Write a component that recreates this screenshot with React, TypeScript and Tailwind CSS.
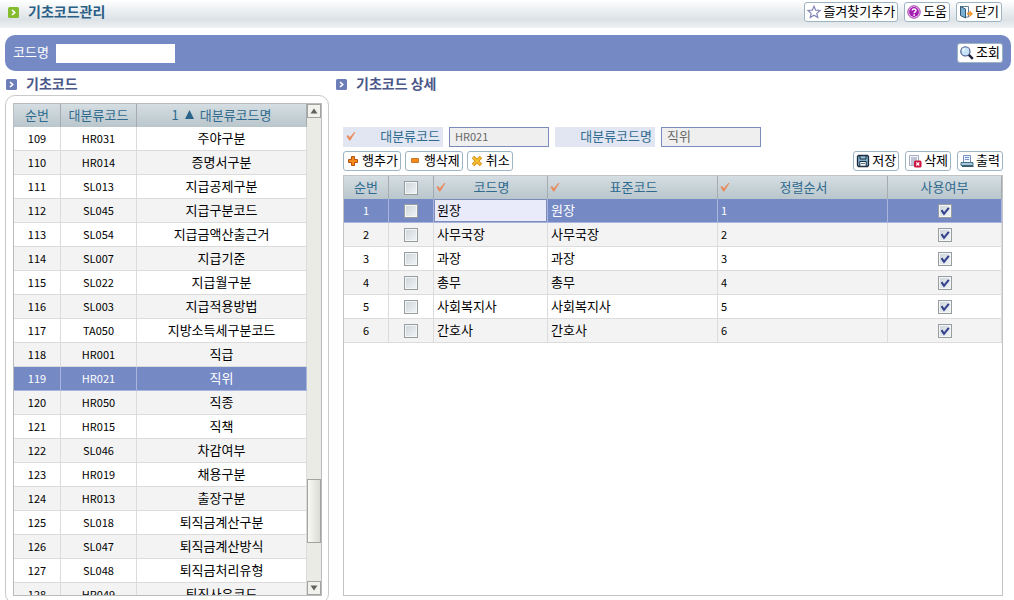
import React, { useState } from 'react';

const categories = [
  { no: 109, code: 'HR031', name: '주야구분' },
  { no: 110, code: 'HR014', name: '증명서구분' },
  { no: 111, code: 'SL013', name: '지급공제구분' },
  { no: 112, code: 'SL045', name: '지급구분코드' },
  { no: 113, code: 'SL054', name: '지급금액산출근거' },
  { no: 114, code: 'SL007', name: '지급기준' },
  { no: 115, code: 'SL022', name: '지급월구분' },
  { no: 116, code: 'SL003', name: '지급적용방법' },
  { no: 117, code: 'TA050', name: '지방소득세구분코드' },
  { no: 118, code: 'HR001', name: '직급' },
  { no: 119, code: 'HR021', name: '직위' },
  { no: 120, code: 'HR050', name: '직종' },
  { no: 121, code: 'HR015', name: '직책' },
  { no: 122, code: 'SL046', name: '차감여부' },
  { no: 123, code: 'HR019', name: '채용구분' },
  { no: 124, code: 'HR013', name: '출장구분' },
  { no: 125, code: 'SL018', name: '퇴직금계산구분' },
  { no: 126, code: 'SL047', name: '퇴직금계산방식' },
  { no: 127, code: 'SL048', name: '퇴직금처리유형' },
  { no: 128, code: 'HR049', name: '퇴직사유코드' },
];

const details = ['원장', '사무국장', '과장', '총무', '사회복지사', '간호사'];

const icons: Record<string, React.ReactNode> = {
  star: (
    <path d="M7 1.2 8.7 5.2 13 5.5 9.8 8.4 10.8 12.6 7 10.3 3.2 12.6 4.2 8.4 1 5.5 5.3 5.2Z" fill="#fff" stroke="#8184b8" strokeWidth="1.2" />
  ),
  help: (
    <>
      <circle cx="7" cy="7" r="6.2" fill="#f6dcf6" stroke="#9a2fa6" />
      <circle cx="7" cy="7" r="4.9" fill="#a31bb0" />
      <path d="M5.2 5.6C5.2 3.4 9 3.4 9 5.5 9 7 7.1 6.8 7.1 8.3" fill="none" stroke="#fff" strokeWidth="1.4" />
      <rect x="6.3" y="9.3" width="1.6" height="1.5" fill="#fff" />
    </>
  ),
  close: (
    <>
      <path d="M1.5 1.5H9.5V12H6" fill="#fff" stroke="#5f7f99" />
      <path d="M1.5 1.5 6.5 4V13L1.5 10.5Z" fill="#79b2d6" stroke="#35566f" />
      <path d="M8 7.6H10.5V5.2L14 8.7 10.5 12.2V9.8H8Z" fill="#f39a35" />
    </>
  ),
  search: (
    <>
      <path d="M8.6 8.6 12.8 12.8" stroke="#1d2438" strokeWidth="2.4" />
      <circle cx="5.4" cy="5.4" r="4.6" fill="#c5e4f8" stroke="#3f4f86" strokeWidth="1.1" />
      <path d="M3 5.2C3 3.8 4 3 5.2 3" stroke="#fff" strokeWidth="1.4" fill="none" />
    </>
  ),
  plus: <path d="M5.5 2.5H8.5V5.5H11.5V8.5H8.5V11.5H5.5V8.5H2.5V5.5H5.5Z" fill="#f58a1c" stroke="#b8500c" />,
  minus: <path d="M3.5 4.5H10.5V8.5H3.5Z" fill="#f58a1c" stroke="#c8782c" />,
  cancel: (
    <>
      <path d="M3 3 11 11M11 3 3 11" stroke="#d08a12" strokeWidth="3.4" />
      <path d="M3.3 3.3 10.7 10.7M10.7 3.3 3.3 10.7" stroke="#fdc32c" strokeWidth="1.7" />
    </>
  ),
  save: (
    <>
      <path d="M1.5 2.5 2.5 1.5H11.5L12.5 2.5V11.5L11.5 12.5H2.5L1.5 11.5Z" fill="#7fb0cd" stroke="#1b2b3c" strokeWidth="1.3" />
      <path d="M4 1.8H10V5H4Z" fill="#9cc6de" stroke="#1b2b3c" />
      <path d="M3.8 7.5H10.2V12.2H3.8Z" fill="#fff" stroke="#1b2b3c" />
      <path d="M5 9.5H9" stroke="#4e7590" />
    </>
  ),
  remove: (
    <>
      <path d="M1.5 1.5H10.5V11.5H1.5Z" fill="#f5f7fb" stroke="#a3aec4" />
      <path d="M3 4H9M3 6H9M3 8H6M3 10H6" stroke="#8792ad" />
      <rect x="6" y="6.5" width="7.5" height="7" rx="1.5" fill="#cf1240" />
      <path d="M8.2 8.4 11.3 11.5M11.3 8.4 8.2 11.5" stroke="#fff" strokeWidth="1.1" />
    </>
  ),
  print: (
    <>
      <path d="M3.5 1.5H10.5V8.5H3.5Z" fill="#eef4fd" stroke="#7490c4" />
      <path d="M5 3.5H9M5 5.5H9" stroke="#7490c4" />
      <path d="M1 8.5H13V11.5H1Z" fill="#a6c6d8" stroke="#47718a" />
      <path d="M2 12.3H13.5" stroke="#2c5268" strokeWidth="1.3" />
    </>
  ),
};

function ToolButton({ icon, label }: { icon: string; label: string }) {
  return (
    <button
      type="button"
      className="flex h-5 shrink-0 items-center gap-0.5 rounded-[3px] border border-[#9db4c3] bg-white px-0.5 text-[13px] leading-4 whitespace-nowrap text-black"
    >
      <svg viewBox="0 0 14 14" className="size-3.5 shrink-0" aria-hidden="true">{icons[icon]}</svg>
      <span className="pb-0.5">{label}</span>
    </button>
  );
}

function Bullet({ green = false }: { green?: boolean }) {
  return (
    <svg viewBox="0 0 11 11" className="size-[11px] shrink-0" aria-hidden="true">
      <rect width="11" height="11" rx="1.5" fill={green ? '#85bb2f' : '#6c7db8'} />
      <path d="M4 3 6.7 5.5 4 8" fill="none" stroke="#fff" strokeWidth="1.7" />
    </svg>
  );
}

function RequiredMark() {
  return (
    <svg viewBox="0 0 10 10" className="size-2.5 shrink-0" aria-hidden="true">
      <path d="M0.5 5 2 4 3.8 6.2 8.6 0.8 9.4 1.3 4.2 9.4 3.2 9.4Z" fill="#e98a5c" />
    </svg>
  );
}

function SectionTitle({ children }: { children: React.ReactNode }) {
  return (
    <h2 className="flex h-6 shrink-0 items-center gap-[9px] pt-0.5 pl-px text-sm leading-5 font-bold text-[#4a5788]">
      <Bullet />
      <span className="pb-0.5">{children}</span>
    </h2>
  );
}

function Tick({ label, on = false }: { label: string; on?: boolean }) {
  const [checked, setChecked] = useState(on);
  return (
    <span className="relative mx-auto block size-3.5">
      <input
        type="checkbox"
        aria-label={label}
        checked={checked}
        onChange={(e) => setChecked(e.target.checked)}
        className="block size-3.5 appearance-none border border-[#979c9f] bg-linear-to-br from-[#cbd5da] to-[#f2f5f8] shadow-[inset_0_0_0_1px_#f4f6f8]"
      />
      {checked && (
        <svg viewBox="0 0 14 14" className="pointer-events-none absolute inset-0 size-3.5" aria-hidden="true">
          <path d="M3.5 6.2 6 9.8 10.8 3.8" fill="none" stroke="#34428c" strokeWidth="2.1" />
        </svg>
      )}
    </span>
  );
}

function ScrollArrow({ down = false }: { down?: boolean }) {
  return (
    <button
      type="button"
      aria-label={down ? '아래로' : '위로'}
      className="flex h-3.5 shrink-0 items-center justify-center border border-[#a3a49e] bg-[#f1f1ed]"
    >
      <svg viewBox="0 0 8 6" className="h-1.5 w-2" aria-hidden="true">
        <path d={down ? 'M0.5 0.5H7.5L4 5.5Z' : 'M0.5 5.5H7.5L4 0.5Z'} fill="#61625c" />
      </svg>
    </button>
  );
}

const th = 'h-[23px] border-r border-[#a5abae] px-0 pt-0 pb-0.5 font-normal';
const thTick = 'h-[23px] border-r border-[#a5abae] p-0';
const td = 'h-6 border-r border-b border-[#dcdcdc] pb-0.5';
const tdOn = 'h-6 border-r border-b border-[#a9b5dc] pb-0.5';
const tdTick = 'h-6 border-r border-b border-[#dcdcdc] p-0';
const tdTickOn = 'h-6 border-r border-b border-[#a9b5dc] p-0';

export default function App() {
  const [selected, setSelected] = useState(119);

  return (
    <div className="flex h-screen flex-col overflow-hidden bg-white font-['Noto_Sans_CJK_KR',sans-serif] text-[13px] leading-4 text-black">
      <header className="flex h-7 shrink-0 items-start justify-between bg-linear-to-b from-white via-[#dce2e6] via-70% to-[#f0f2f4] pt-0.5 pr-3 pl-2">
        <h1 className="flex h-5 items-center gap-[9px] text-sm leading-5 font-bold text-[#2a5f86]">
          <Bullet green />
          <span className="pb-0.5">기초코드관리</span>
        </h1>
        <div className="flex gap-1.5">
          <ToolButton icon="star" label="즐겨찾기추가" />
          <ToolButton icon="help" label="도움" />
          <ToolButton icon="close" label="닫기" />
        </div>
      </header>

      {/* search bar */}
      <form
        onSubmit={(e) => e.preventDefault()}
        className="mt-[7px] mr-[3px] ml-[5px] flex h-9 shrink-0 items-center justify-between rounded-[10px] bg-[#7589c5] px-2"
      >
        <div className="flex items-center gap-[7px]">
          <label htmlFor="codeName" className="pb-0.5 text-white">코드명</label>
          <input id="codeName" type="text" className="h-[19px] w-[119px] bg-white px-1 outline-none" />
        </div>
        <ToolButton icon="search" label="조회" />
      </form>

      <main className="flex min-h-0 flex-1">
        {/* category list */}
        <section className="ml-[5px] flex w-[324px] shrink-0 flex-col">
          <SectionTitle>기초코드</SectionTitle>
          <div className="-mb-1 flex min-h-0 flex-1 flex-col rounded-[10px] border border-[#c9c9c9] p-[7px] pr-1.5">
            <div className="flex min-h-0 flex-1 border border-[#b9bcbe]">
              <div className="min-w-0 flex-1 overflow-hidden">
                <table className="w-full table-fixed border-separate border-spacing-0 text-center">
                  <colgroup>
                    <col className="w-[47px]" />
                    <col className="w-[76px]" />
                    <col />
                  </colgroup>
                  <thead className="bg-linear-to-b from-[#d5dee2] to-[#b9c6cc] text-[#2f6a8f]">
                    <tr>
                      <th className={th}>순번</th>
                      <th className={th}>대분류코드</th>
                      <th className={th}>
                        <span className="flex items-center justify-center gap-1.5">
                          1
                          <svg viewBox="0 0 9 9" className="size-[9px]" aria-hidden="true">
                            <path d="M4.5 0 9 9H0Z" fill="#2a648a" />
                          </svg>
                          대분류코드명
                        </span>
                      </th>
                    </tr>
                  </thead>
                  <tbody>
                    {categories.map((c) => {
                      const on = c.no === selected;
                      return (
                        <tr
                          key={c.no}
                          onClick={() => setSelected(c.no)}
                          className={on ? 'bg-[#7589c5] text-white' : 'odd:bg-white even:bg-[#f3f3f3]'}
                        >
                          <td className={`${on ? tdOn : td} text-[11px]`}>{c.no}</td>
                          <td className={`${on ? tdOn : td} text-[11px]`}>{c.code}</td>
                          <td className={on ? tdOn : td}>{c.name}</td>
                        </tr>
                      );
                    })}
                  </tbody>
                </table>
              </div>
              <div className="flex w-3.5 shrink-0 flex-col bg-[#ebebe6]">
                <ScrollArrow />
                <div className="flex-1" />
                <div className="h-16 border border-[#a3a49e] bg-linear-to-r from-[#f8f8f5] to-[#dcdcd5]" />
                <div className="h-[38px]" />
                <ScrollArrow down />
              </div>
            </div>
          </div>
        </section>

        {/* code details */}
        <section className="ml-1.5 flex min-w-0 flex-1 flex-col pr-[11px]">
          <SectionTitle>기초코드 상세</SectionTitle>

          <div className="mt-8 ml-2 flex h-5 shrink-0 gap-1.5">
            <label htmlFor="majorCode" className="flex w-[100px] items-center justify-between bg-[#e2e6f2] px-[3px] pb-0.5 text-[#2f6a8f]">
              <RequiredMark />
              대분류코드
            </label>
            <input
              id="majorCode"
              readOnly
              value="HR021"
              className="w-[100px] border border-[#7c8cba] bg-[#efefef] px-[5px] pb-0.5 text-[11px] text-[#686868] outline-none"
            />
            <label htmlFor="majorName" className="flex w-[100px] items-center justify-end bg-[#e2e6f2] px-[3px] pb-0.5 text-[#2f6a8f]">
              대분류코드명
            </label>
            <input
              id="majorName"
              readOnly
              value="직위"
              className="w-[100px] border border-[#7c8cba] bg-[#efefef] px-[5px] pb-0.5 text-[#686868] outline-none"
            />
          </div>

          <div className="mt-1 ml-2 flex shrink-0 justify-between">
            <div className="flex gap-1">
              <ToolButton icon="plus" label="행추가" />
              <ToolButton icon="minus" label="행삭제" />
              <ToolButton icon="cancel" label="취소" />
            </div>
            <div className="flex gap-1.5">
              <ToolButton icon="save" label="저장" />
              <ToolButton icon="remove" label="삭제" />
              <ToolButton icon="print" label="출력" />
            </div>
          </div>

          <div className="mt-1 mb-1 ml-2 min-h-0 flex-1 overflow-hidden border border-[#c3c3c3]">
            <table className="w-full table-fixed border-separate border-spacing-0">
              <colgroup>
                <col className="w-[45px]" />
                <col className="w-[45px]" />
                <col className="w-[114px]" />
                <col className="w-[170px]" />
                <col className="w-[170px]" />
                <col />
              </colgroup>
              <thead className="bg-linear-to-b from-[#d5dee2] to-[#b9c6cc] text-[#2f6a8f]">
                <tr>
                  <th className={th}>순번</th>
                  <th className={thTick}><Tick label="전체 선택" /></th>
                  {['코드명', '표준코드', '정렬순서'].map((h) => (
                    <th key={h} className={th}>
                      <span className="flex items-center pl-0.5">
                        <RequiredMark />
                        <span className="flex-1 pr-2.5">{h}</span>
                      </span>
                    </th>
                  ))}
                  <th className={th}>사용여부</th>
                </tr>
              </thead>
              <tbody>
                {details.map((name, i) => {
                  const cell = i === 0 ? tdOn : td;
                  const tickCell = i === 0 ? tdTickOn : tdTick;
                  return (
                    <tr key={name} className={i === 0 ? 'bg-[#7589c5] text-white' : 'odd:bg-white even:bg-[#f3f3f3]'}>
                      <td className={`${cell} text-center text-[11px]`}>{i + 1}</td>
                      <td className={tickCell}><Tick label={`${name} 선택`} /></td>
                      {i === 0 ? (
                        <td className={tickCell}>
                          <input
                            aria-label="코드명"
                            defaultValue={name}
                            className="block h-[23px] w-full border border-[#7c8cba] bg-[#e9eafa] px-0.5 pb-0.5 text-black outline-none"
                          />
                        </td>
                      ) : (
                        <td className={`${cell} pl-[3px]`}>{name}</td>
                      )}
                      <td className={`${cell} pl-[3px]`}>{name}</td>
                      <td className={`${cell} pl-[3px] text-[11px]`}>{i + 1}</td>
                      <td className={tickCell}><Tick label={`${name} 사용여부`} on /></td>
                    </tr>
                  );
                })}
              </tbody>
            </table>
          </div>
        </section>
      </main>
    </div>
  );
}
